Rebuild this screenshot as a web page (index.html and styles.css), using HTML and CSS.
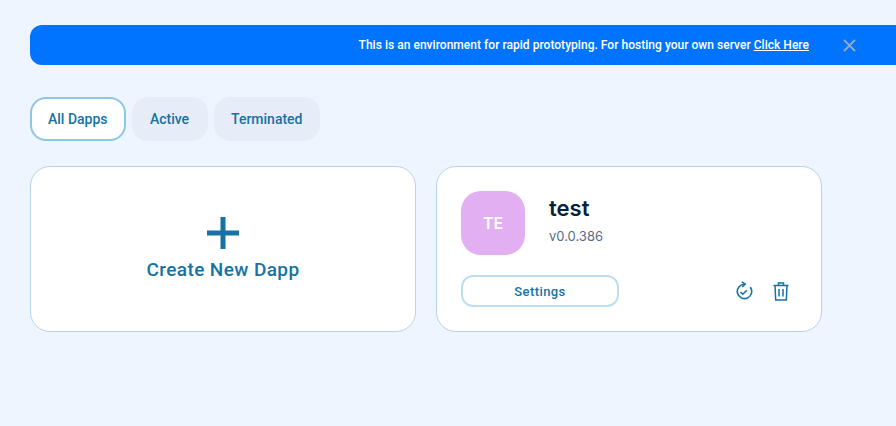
FILE: index.html
```html
<!DOCTYPE html>
<html lang="en">
<head>
    <meta charset="UTF-8">
    <title>Dapps</title>
    <link rel="stylesheet" href="styles.css">
</head>
<body>
    <div class="banner">
        <p class="banner-text">This is an environment for rapid prototyping. For hosting your own server <a href="#">Click Here</a></p>
        <button class="banner-close" aria-label="Close">
            <svg width="13" height="13" viewBox="0 0 13 13"><path d="M1 1l11 11M12 1L1 12" stroke="#93a9c6" stroke-width="1.8" fill="none"/></svg>
        </button>
    </div>

    <div class="tabs">
        <button class="tab active">All Dapps</button>
        <button class="tab">Active</button>
        <button class="tab">Terminated</button>
    </div>

    <div class="cards">
        <div class="card create">
            <svg width="32" height="32" viewBox="0 0 32 32"><path d="M16 0v32M0 16h32" stroke="#1672a3" stroke-width="5" fill="none"/></svg>
            <span class="create-label">Create New Dapp</span>
        </div>

        <div class="card dapp">
            <div class="dapp-top">
                <div class="avatar">TE</div>
                <div class="dapp-info">
                    <div class="dapp-name">test</div>
                    <div class="dapp-version">v0.0.386</div>
                </div>
            </div>
            <div class="dapp-bottom">
                <button class="settings">Settings</button>
                <div class="dapp-icons">
                    <svg width="18" height="20" viewBox="0 0 18 20" fill="none" stroke="#1672a3" stroke-width="1.6"><path d="M9.5 3.2A7.2 7.2 0 1 0 15.2 6"/><path d="M6.8 0.8l3.4 2.4-3 2.8"/><path d="M5.4 11l2.4 2.2 4-4"/></svg>
                    <svg width="16" height="19" viewBox="0 0 16 19" fill="none" stroke="#1672a3" stroke-width="1.5"><path d="M0.5 3.5h15M5.5 3.5V1h5v2.5M2 3.5l0.7 14.5h10.6L14 3.5M6 7v7.5M10 7v7.5"/></svg>
                </div>
            </div>
        </div>
    </div>
</body>
</html>
```

FILE: styles.css
```css
* {
    margin: 0;
    padding: 0;
    box-sizing: border-box;
}
body {
    background: #eef5ff;
    padding: 25px 0 0 30px;
    font-family: Roboto, sans-serif;
    height: 426px;
    overflow: hidden;
}
button {
    font-family: inherit;
    cursor: pointer;
}
.banner {
    height: 40px;
    background: #0074ff;
    border-radius: 12px 0 0 12px;
    display: flex;
    align-items: center;
    justify-content: flex-end;
    padding-right: 40px;
}
.banner-text {
    color: #fff;
    font-size: 12px;
    font-weight: 500;
    letter-spacing: 0.03px;
}
.banner-text a {
    color: #fff;
}
.banner-close {
    background: none;
    border: none;
    margin-left: 34px;
    display: flex;
}
.tabs {
    display: flex;
    gap: 6px;
    margin-top: 32px;
}
.tab {
    height: 44px;
    min-width: 76px;
    padding: 0 17.5px;
    border: none;
    border-radius: 16px;
    background: #e6edf8;
    color: #1672a3;
    font-size: 14px;
    font-weight: 500;
}
.tab.active {
    background: #fff;
    border: 2px solid #8cc6e8;
    padding: 0 16px;
}
.cards {
    display: flex;
    gap: 20px;
    margin-top: 25px;
}
.card {
    width: 386px;
    height: 166px;
    background: #fff;
    border: 1px solid #b7d3ea;
    border-radius: 20px;
}
.create {
    display: flex;
    flex-direction: column;
    align-items: center;
    padding-top: 50px;
}
.create-label {
    color: #1672a3;
    font-size: 19px;
    font-weight: 500;
    letter-spacing: 0.4px;
    margin-top: 9px;
}
.dapp {
    padding: 24px 24px 0;
}
.dapp-top {
    display: flex;
    gap: 24px;
}
.avatar {
    width: 64px;
    height: 64px;
    border-radius: 20px;
    background: #e2aff2;
    color: #fff;
    font-family: Inter, sans-serif;
    font-size: 16px;
    font-weight: 600;
    display: flex;
    align-items: center;
    justify-content: center;
}
.dapp-info {
    padding-top: 3px;
}
.dapp-name {
    color: #0a1f38;
    font-family: Inter, sans-serif;
    font-size: 22px;
    font-weight: 600;
    line-height: 28px;
}
.dapp-version {
    color: #5b6b85;
    font-family: Inter, sans-serif;
    font-size: 13px;
    line-height: 18px;
    margin-top: 5px;
}
.dapp-bottom {
    display: flex;
    align-items: center;
    justify-content: space-between;
    margin-top: 20px;
}
.settings {
    width: 158px;
    height: 32px;
    background: #fff;
    border: 2px solid #bfdef2;
    border-radius: 12px;
    color: #1672a3;
    font-size: 13px;
    font-weight: 500;
    letter-spacing: 0.4px;
}
.dapp-icons {
    display: flex;
    align-items: center;
    gap: 20px;
    padding-right: 8px;
}
```
